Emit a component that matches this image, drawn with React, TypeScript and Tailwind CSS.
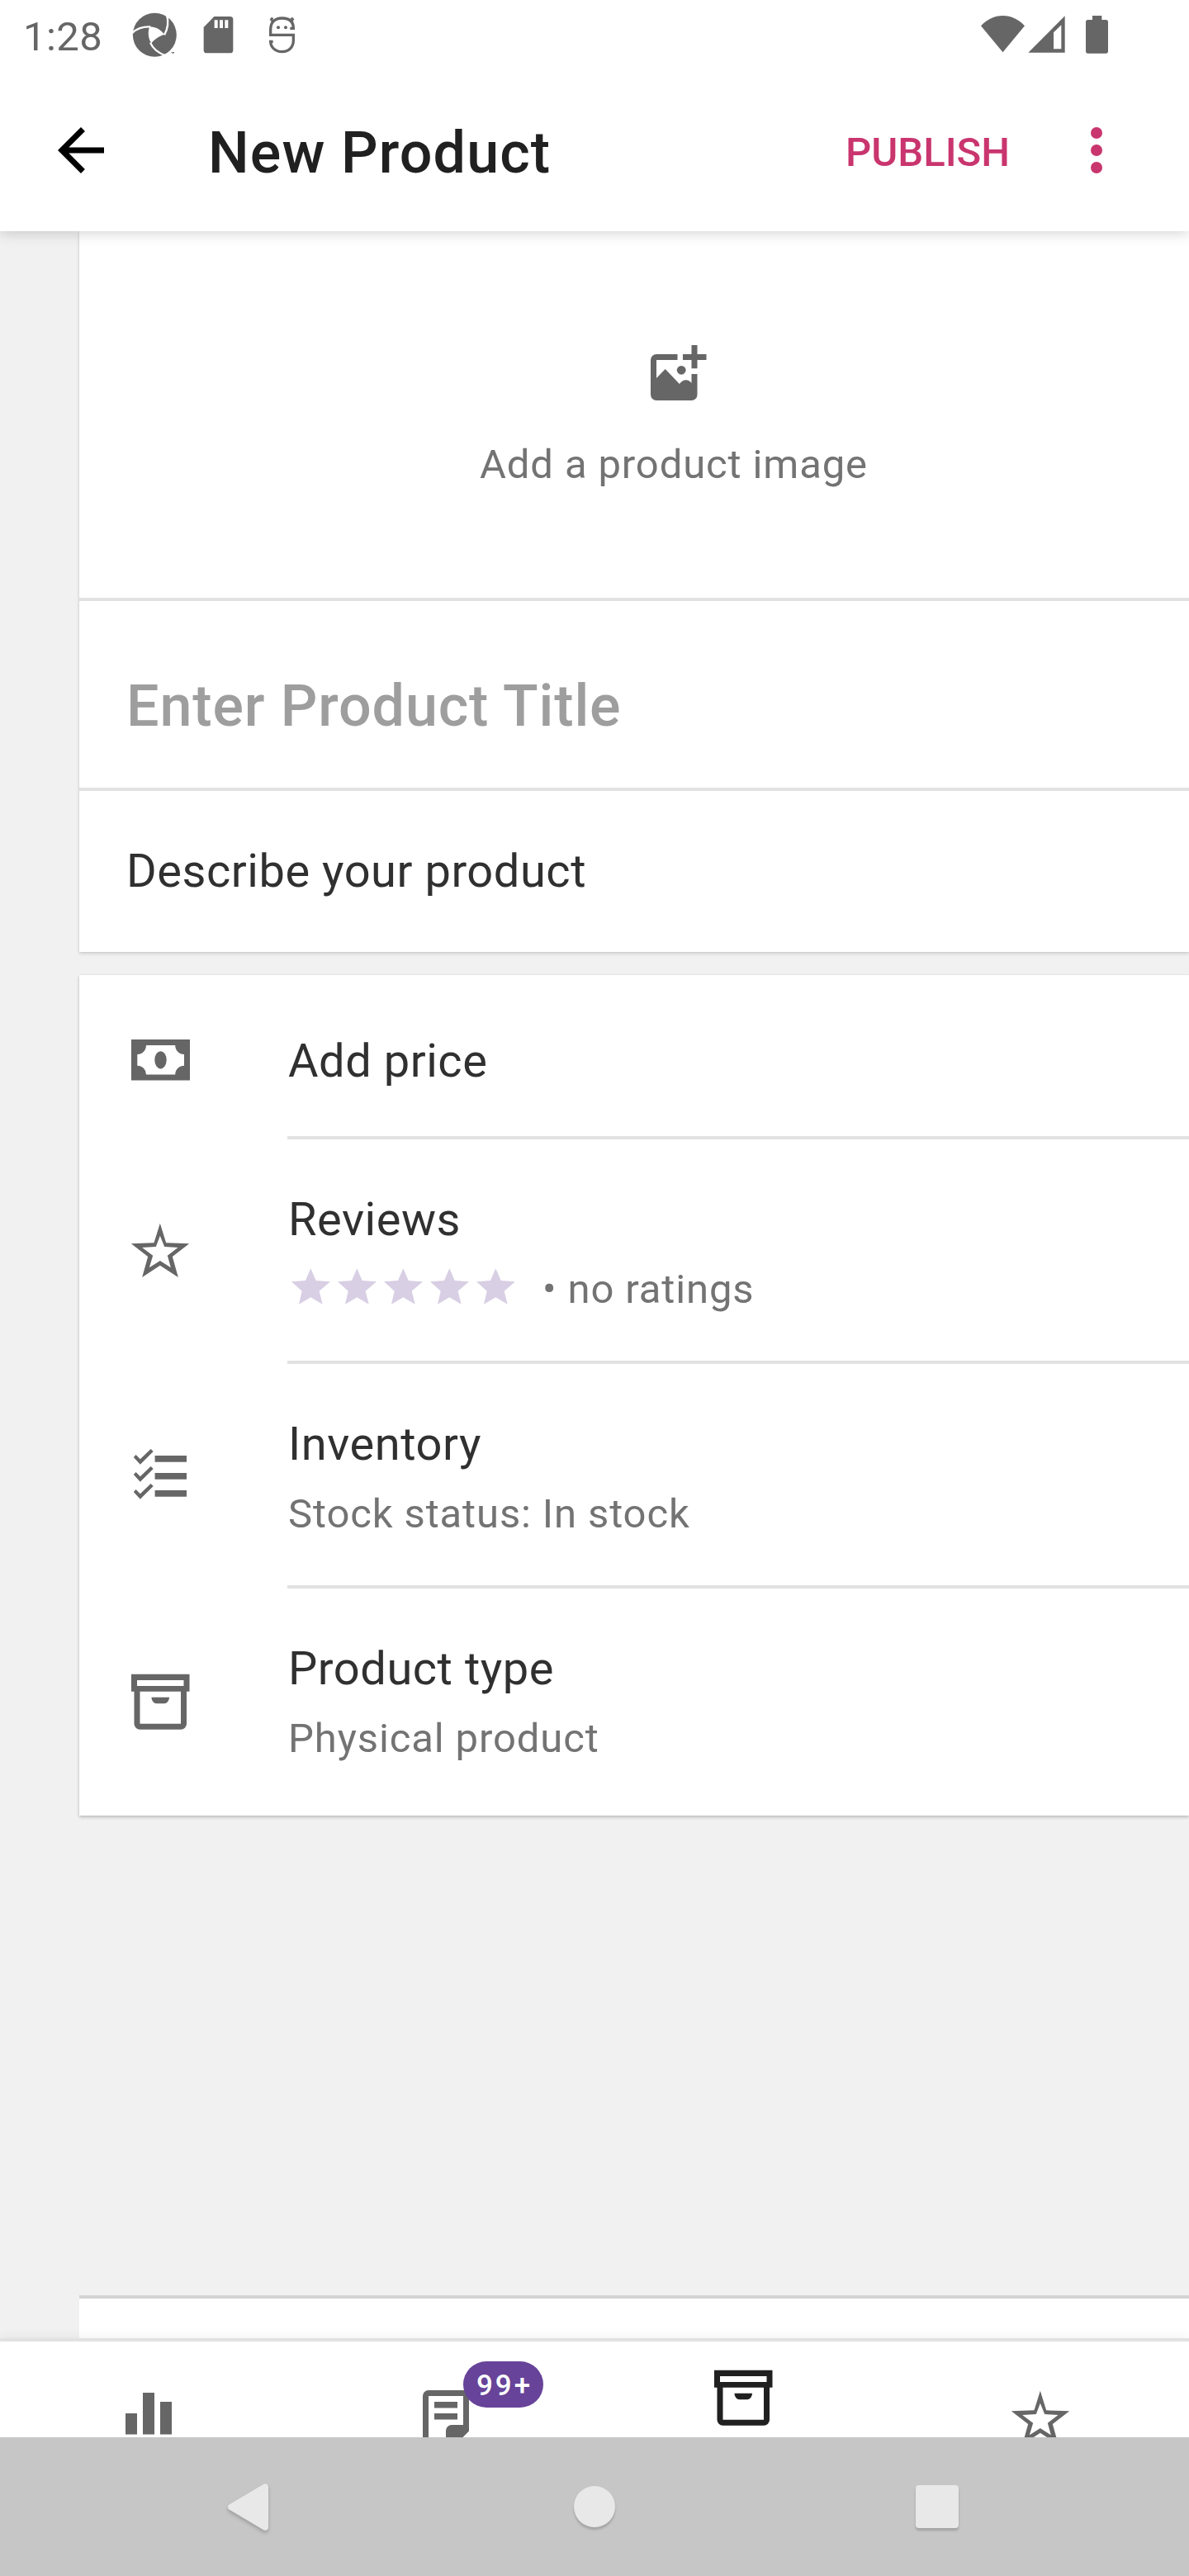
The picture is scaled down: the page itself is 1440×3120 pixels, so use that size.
import type { ReactNode } from 'react';

const STAR_OUTLINE =
  'M343 845L365 916L449 919L388 966L409 1041L343 998L278 1041L299 966L238 919L321 916Z' +
  'M343 890L328 930L278 933L317 962L304 1006L343 981L382 1006L370 962L408 933L359 930Z';

const STAR_X = [889, 1057, 1225, 1393, 1561];

function BoxIcon({ className }: { className: string }) {
  return (
    <svg viewBox="0 -0.8 84 84" className={className} fill="currentColor" fillRule="evenodd">
      <path d="M7 10H77.5V31H74V70a7 7 0 0 1-7 7H17.5a7 7 0 0 1-7-7V31H7ZM14 17.2V24.3H70.5V17.2ZM17.5 31V70H67V31ZM31.5 38H53C53 42 50 45.5 47 45.5H37.5C34.500 45.500 31.500 42 31.500 38Z" />
    </svg>
  );
}

function StarIcon({ className }: { className: string }) {
  return (
    <svg viewBox="217.500 819 252 252" className={className} fill="currentColor" fillRule="evenodd">
      <path d={STAR_OUTLINE} />
    </svg>
  );
}

function MoneyIcon() {
  return (
    <svg viewBox="0 0 84 84" className="size-[84px] text-[#666666]" fill="currentColor" fillRule="evenodd">
      <path d="M7 17H78V66.600H7ZM25 24A10.700 10.700 0 0 1 14.300 35V48.700A10.700 10.700 0 0 1 25 59.500H60.200A10.700 10.700 0 0 1 71 48.700V35A10.700 10.700 0 0 1 60.200 24Z" />
      <ellipse cx="42.500" cy="41.800" rx="7.200" ry="10.600" />
    </svg>
  );
}

function ChecklistIcon() {
  return (
    <svg viewBox="152 1745 84 84" className="size-[84px] text-[#666666]" fill="currentColor">
      {[0, 21, 42].map((dy) => (
        <g key={dy} transform={`translate(0 ${dy})`}>
          <path d="M161.800 1765L164.600 1762L169.800 1767.300L182.600 1755L185.700 1758L169.800 1773.800Z" />
          <path d="M187.600 1763H226V1770.700H187.600Z" />
        </g>
      ))}
    </svg>
  );
}

function StatusBar() {
  return (
    <div className="relative z-20 flex h-[84px] shrink-0 items-start bg-white text-[#666666]">
      <span className="ml-7 mt-4 w-[102px] whitespace-nowrap text-[49px] leading-[58px] tracking-[0.45px]">1:28</span>
      <svg viewBox="0 0 250 84" className="ml-[20px] h-[84px] w-[250px]" fill="currentColor">
        <g transform="translate(-150 0) scale(0.33333)">
          <circle cx="562" cy="127" r="79.500" />
          <path fill="#fff" d="M543 98C562 95 584 107 597 125C581 131 562 141 550 157C539 140 536 118 543 98Z" />
          <path
            fill="none"
            stroke="#fff"
            strokeWidth="7"
            d="M479 121C497 102 519 96 547 97M597 127C610 104 614 82 606 54M546 155C554 174 574 192 603 203"
          />
          <path fill="#fff" d="M584 206L606 194L618 190L640 190L630 212L590 215Z" />
          <path d="M622 189h4v5h-2v-3h-2zM627 189h6v5h-2v-3h-2v3h-2z" />
          <path
            fillRule="evenodd"
            d="M778 60H836a11 11 0 0 1 11 11V182a11 11 0 0 1-11 11H751a11 11 0 0 1-11-11V99ZM779 73V102H791V73ZM798 73V102H810V73ZM817 73V102H829V73Z"
          />
          <g fill="none" stroke="currentColor" strokeWidth="10">
            <path d="M1054 103H1066C1066 76 1048 66 1025 66C1000 66 983 80 983 108V127H1066V148C1066 172 1048 188 1025 188C1001 188 983 172 983 151H992" />
            <path d="M982 68L997 78M1067 68L1052 78M990 64L984 77M1059 64L1065 77" strokeWidth="8" />
          </g>
          <circle cx="1011" cy="100" r="6" />
          <circle cx="1038" cy="100" r="6" />
        </g>
      </svg>
      <svg viewBox="84 0 462 252" className="ml-auto mr-[98px] h-[84px] w-[154px]" fill="currentColor">
        <path d="M84 94C106 70 134 57 163.500 57C193 57 221 70 243 94L163.500 190Z" />
        <path fillRule="evenodd" d="M256 191L389 58V191ZM348 118V178H376V91Z" />
        <path d="M489 57H523V72H538a8 8 0 0 1 8 8V186a8 8 0 0 1-8 8H473a8 8 0 0 1-8-8V80a8 8 0 0 1 8-8H489Z" />
      </svg>
    </div>
  );
}

function AppBar() {
  return (
    <header className="relative z-10 flex h-[196px] shrink-0 bg-white shadow-[0_2px_16px_rgba(0,0,0,0.18)]">
      <svg viewBox="0 0 24 24" className="ml-14 mt-14 size-[84px] text-black" fill="currentColor">
        <path d="M20 11H7.830l5.590-5.590L12 4l-8 8 8 8 1.410-1.410L7.830 13H20v-2z" />
      </svg>
      <h1 className="ml-28 mt-[60px] whitespace-nowrap text-[70px] font-medium leading-[82px] tracking-[0.0160em] text-[#202020]">
        New Product
      </h1>
      <button className="ml-auto mr-[98px] mt-[72px] h-[58px] whitespace-nowrap text-[49px] font-medium leading-[58px] text-[#c9356e]">
        PUBLISH
      </button>
      <div className="mr-[105px] mt-[70px] flex w-[14px] flex-col gap-[7px]">
        <span className="size-[14px] rounded-full bg-[#c9356e]" />
        <span className="size-[14px] rounded-full bg-[#c9356e]" />
        <span className="size-[14px] rounded-full bg-[#c9356e]" />
      </div>
    </header>
  );
}

function Row({ icon, title, children, last }: { icon: ReactNode; title: string; children: ReactNode; last?: boolean }) {
  return (
    <div className={last ? 'flex h-[275px]' : 'flex h-[272px]'}>
      <div className="ml-14 mr-28 mt-[93px] size-[84px] shrink-0">{icon}</div>
      <div className={last ? 'flex-1 pt-16' : 'flex-1 border-b-4 border-[#e2e2e2] pt-16'}>
        <div className="ml-px text-[56px] leading-[66px] tracking-[0.0094em] text-[#303030]">{title}</div>
        <div className="ml-px mt-[23px] flex h-[58px] whitespace-nowrap text-[49px] leading-[58px] tracking-[0.0179em] text-[#737373]">
          {children}
        </div>
      </div>
    </div>
  );
}

function ProductForm() {
  return (
    <main className="flex h-[2552px] shrink-0 flex-col overflow-hidden bg-[#f1f1f1] pl-24">
      <section className="shrink-0 bg-white shadow-[0_0_1px_rgba(0,0,0,0.15),0_2px_4px_rgba(0,0,0,0.15)]">
        <div className="flex h-[448px] flex-col items-center border-b-4 border-[#e2e2e2] pl-24 pt-[124px]">
          <svg viewBox="0 0 84 84" className="size-[84px] text-[#666666]" fill="currentColor">
            <path
              fillRule="evenodd"
              d="M21 25H46.500V32H21V54L31.700 43L48.900 61C51 58 54 56.300 56.700 56.300C59.500 56.300 62 58 63.500 60V49H70.500V74a7 7 0 0 1-7 7H21a7 7 0 0 1-7-7V32a7 7 0 0 1 7-7Z"
            />
            <circle cx="51.200" cy="44.300" r="5.400" />
            <path d="M63.500 14H70.500V25H81.500V32H70.500V42.300H63.500V32H53V25H63.500Z" />
          </svg>
          <span className="mt-[46px] whitespace-nowrap text-[49px] leading-[58px] tracking-[0.0179em] text-[#737373]">
            Add a product image
          </span>
        </div>
        <div className="h-[230px] border-b-4 border-[#e2e2e2] pl-[57px] pt-[86px] text-[70px] font-medium leading-[82px] tracking-[0.0125em] text-[#9e9e9e]">
          Enter Product Title
        </div>
        <div className="h-[195px] pl-[57px] pt-16 text-[56px] leading-[66px] tracking-[0.0094em] text-[#303030]">
          Describe your product
        </div>
      </section>

      <section className="mt-7 shrink-0 bg-white shadow-[0_0_1px_rgba(0,0,0,0.15),0_2px_4px_rgba(0,0,0,0.22)]">
        <div className="flex h-[199px]">
          <div className="ml-14 mr-28 mt-[61px] size-[84px] shrink-0">
            <MoneyIcon />
          </div>
          <div className="flex-1 border-b-4 border-[#e2e2e2] pl-px pt-[71px] text-[56px] leading-[66px] tracking-[0.0094em] text-[#303030]">
            Add price
          </div>
        </div>
        <Row icon={<StarIcon className="size-[84px] text-[#666666]" />} title="Reviews">
          <svg viewBox="807 999 840 174" className="h-[58px] w-[280px]" fill="#d8cfe4">
            {STAR_X.map((x) => (
              <path
                key={x}
                transform={`translate(${x} 0)`}
                d="M0 1009L19 1053L71 1057L31 1091L43 1139L0 1114L-43 1139L-32 1091L-70 1057L-19 1053Z"
              />
            ))}
          </svg>
          <span className="ml-7">• no ratings</span>
        </Row>
        <Row icon={<ChecklistIcon />} title="Inventory">
          Stock status: In stock
        </Row>
        <Row icon={<BoxIcon className="size-[84px] text-[#666666]" />} title="Product type" last>
          Physical product
        </Row>
      </section>

      <section className="mt-auto h-[52px] shrink-0 border-t-4 border-[#d4d4d4] bg-white" />
    </main>
  );
}

function BottomNav() {
  return (
    <nav className="relative z-10 grid h-[120px] shrink-0 grid-cols-4 border-t-4 border-[#e2e2e2] bg-white shadow-[0_0_14px_rgba(0,0,0,0.07)]">
      <div className="flex justify-center">
        <svg viewBox="0 0 56 56" className="mt-[60px] size-14" fill="#666666">
          <path d="M0 27H14V52.500H0ZM21 2H35V52.500H21ZM42 13H56V52.500H42Z" />
        </svg>
      </div>
      <div className="relative flex justify-center">
        <svg viewBox="0 0 56 58" className="mt-[58px] h-[58px] w-14" fill="#666666" fillRule="evenodd">
          <path d="M7 1H49a7 7 0 0 1 7 7V50.500L43 63.500H0V8a7 7 0 0 1 7-7ZM7 8V63.500H28V50a7 7 0 0 1 7-7H49V8ZM14 15H42V22.500H14ZM14 29H42V36.500H14Z" />
        </svg>
        <span className="absolute left-[201px] top-6 flex h-14 w-[97px] justify-center rounded-full bg-[#674399] pl-[3px] pt-[9px] text-[35px] font-medium leading-[41px] tracking-[0.0830em] text-white">
          99+
        </span>
      </div>
      <div className="flex justify-center">
        <BoxIcon className="mt-6 size-[84px] text-[#202020]" />
      </div>
      <div className="flex h-[116px] justify-center overflow-hidden">
        <StarIcon className="mt-[51px] size-[84px] shrink-0 text-[#666666]" />
      </div>
    </nav>
  );
}

function SystemNav() {
  return (
    <div className="relative z-20 flex h-[168px] shrink-0 items-center bg-[#c6c6c6]">
      <svg viewBox="0 0 49 57" className="ml-[276px] h-[57px] w-[49px] drop-shadow-[0_3px_2px_rgba(0,0,0,0.2)]" fill="#e8e8e8">
        <path d="M42 1.500C45 -1 49 0.500 49 4V53C49 56.500 45 58 42 55.500L1.500 31.500C-0.500 30 -0.500 27 1.500 25.500Z" />
      </svg>
      <span className="ml-[370px] size-[50px] rounded-full bg-[#e8e8e8] shadow-[0_3px_3px_rgba(0,0,0,0.18)]" />
      <span className="ml-[364px] size-[52px] rounded bg-[#e8e8e8] shadow-[0_3px_3px_rgba(0,0,0,0.18)]" />
    </div>
  );
}

export default function App() {
  return (
    <div className="flex h-[3120px] w-[1440px] flex-col overflow-hidden bg-white font-['Roboto',sans-serif]">
      <StatusBar />
      <AppBar />
      <ProductForm />
      <BottomNav />
      <SystemNav />
    </div>
  );
}
